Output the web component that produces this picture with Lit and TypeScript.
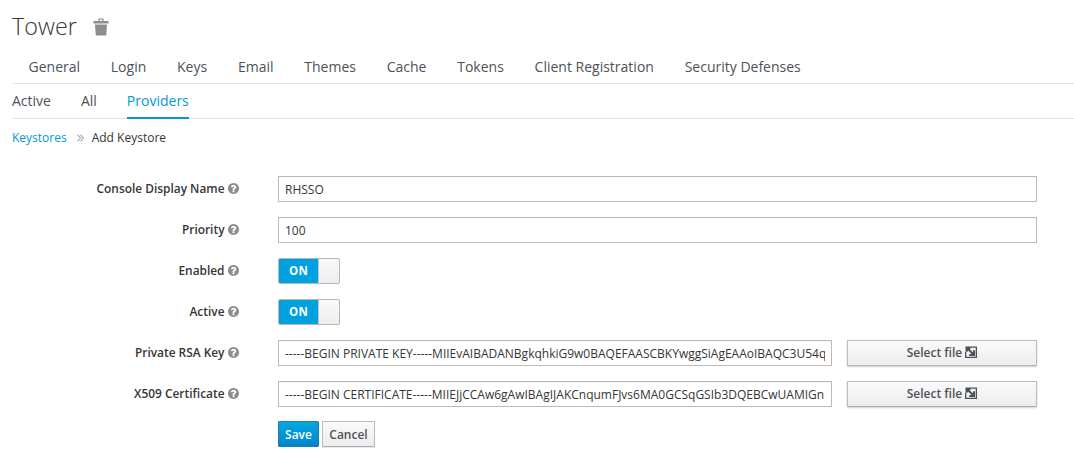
import { LitElement, html, css } from "lit";
import { customElement } from "lit/decorators.js";

const help = html`<svg class="help" viewBox="0 0 1536 1536" width="11" height="11"><path fill="#8b8d8f" d="M896 1248v-192q0-14-9-23t-23-9H672q-14 0-23 9t-9 23v192q0 14 9 23t23 9h192q14 0 23-9t9-23zm256-672q0-88-55.500-163T958 297t-170-41q-243 0-371 213-15 24 8 42l132 100q7 6 19 6 16 0 25-12 53-68 86-92 34-24 86-24 48 0 85.500 26t37.500 59q0 38-20 61t-68 45q-63 28-115.500 86.500T640 892v36q0 14 9 23t23 9h192q14 0 23-9t9-23q0-19 21.500-49.500T972 829q32-18 49-28.500t46-35 44.500-48 28-60.500 12.500-81zm384 192q0 209-103 385.500T1153.500 1433 768 1536t-385.500-103T103 1153.500 0 768t103-385.500T382.500 103 768 0t385.500 103T1433 382.500 1536 768z"/></svg>`;

const fileIcon = html`<svg class="fi" viewBox="0 0 12 12" width="12" height="12"><path fill="none" stroke="#4d5258" stroke-width="1.300" d="M4.500 1.150H11.350V11.350H.65V5.500"/><path fill="#4d5258" d="M.5.500H4.500L6 2 4.800 3.200 8 6.400V4.300H10V10H4.300V8H6.600L3.300 4.700 2 6 .5 4.500z"/></svg>`;

const chevrons = html`<svg viewBox="0 0 7 8" width="7" height="8"><path fill="none" stroke="#a9a9a9" stroke-width="1.100" d="M.6.600 3.500 4 .6 7.400M3.500.600 6.400 4 3.500 7.400"/></svg>`;

@customElement("app-root")
export class AppRoot extends LitElement {
  static styles = css`
    :host { display: block; font-family: "Open Sans", sans-serif; font-size: 12px; color: #363636; background: #fff; height: 459px; overflow: hidden; }
    .page { padding-left: 12px; }
    h1 { margin: 0; height: 49px; display: flex; align-items: center; gap: 16.500px; font-size: 23.400px; font-weight: 300; color: #363636; padding-top: 4px; box-sizing: border-box; line-height: 33px; }
    h1 svg { margin-top: 1px; }
    .tabs { display: flex; gap: 30.770px; height: 34px; padding-left: 16.500px; border-bottom: 1px solid #e4e4e4; font-size: 14px; align-items: center; color: #4d5258; }
    .sub { display: flex; gap: 30px; height: 34px; border-bottom: 1px solid #e4e4e4; font-size: 14px; align-items: center; color: #4d5258; }
    .sub span { height: 34px; line-height: 34px; box-sizing: border-box; }
    .sub .on { color: #0099d3; border-bottom: 2px solid #0099d3; height: 35px; margin-bottom: -1px; }
    .crumbs { display: flex; align-items: center; height: 37px; font-size: 12px; }
    .crumbs a { color: #0099d3; }
    .crumbs svg { margin: 0 8px 0 10px; }
    form { display: grid; grid-template-columns: 266px 759px; row-gap: 15px; padding-top: 20px; }
    label { display: flex; justify-content: flex-end; align-items: center; gap: 3.500px; font-weight: 600; color: #363636; height: 26px; padding-right: 39px; font-size: 11.900px; transform: translateY(-1px); }
    input { display: block; width: 100%; height: 26px; box-sizing: border-box; border: 1px solid #bababa; background: #fff; padding: 2px 6px; font: 12px "Open Sans", sans-serif; color: #363636; box-shadow: inset 0 1px 1px rgba(3,3,3,.03); outline: none; }
    .file { display: flex; gap: 15px; }
    .file input { width: 554px; flex: none; }
    .btn { border: 1px solid #bbb; border-bottom-color: #b0b0b0; border-radius: 1px; background: linear-gradient(#fafafa, #ededed); color: #4d5258; font-size: 12px; font-weight: 600; height: 26px; display: flex; align-items: center; justify-content: center; gap: 3px; box-sizing: border-box; box-shadow: 0 1px 2px rgba(3,3,3,.2); }
    .file .btn { width: 190px; padding-bottom: 2px; }
    .sw { width: 62px; height: 26px; box-sizing: border-box; border: 1px solid #b7b7b7; border-radius: 2px; display: flex; overflow: hidden; background: linear-gradient(#fafafa, #ededed); }
    .sw b { width: 39px; background: #00a1de; color: #fff; font-weight: 700; font-size: 11.500px; text-align: center; line-height: 24px; letter-spacing: .2px; }
    .sw span { flex: 1; border-left: 1px solid #c8c8c8; }
    .actions { grid-column: 2; display: flex; gap: 3px; margin-top: -1px; }
    .save { width: 41px; height: 26px; box-sizing: border-box; border: 1px solid #267da1; border-radius: 1px; color: #fff; background: linear-gradient(#00a8e1, #0085cf); font-weight: 600; font-size: 12px; display: flex; align-items: center; justify-content: center; }
    .cancel { width: 53px; box-shadow: 0 1px 1px rgba(3,3,3,.1); }
    svg { flex: none; display: block; }
  `;

  render() {
    const key = "-----BEGIN PRIVATE KEY-----MIIEvAIBADANBgkqhkiG9w0BAQEFAASCBKYwggSiAgEAAoIBAQC3U54qzPvE8Xo";
    const cert = "-----BEGIN CERTIFICATE-----MIIEJjCCAw6gAwIBAgIJAKCnqumFJvs6MA0GCSqGSIb3DQEBCwUAMIGnMQswCQ";
    return html`<div class="page">
      <h1>Tower <svg viewBox="0 0 16 18" width="16" height="18"><path fill="#8b8d8f" d="M5.500 3V.500h5V3H15.500V5.500H.500V3zM6.700 1.600V3h2.600V1.600zM2 6.500h12l-.8 11H2.800z"/></svg></h1>
      <div class="tabs">
        ${["General", "Login", "Keys", "Email", "Themes", "Cache", "Tokens", "Client Registration", "Security Defenses"].map((t) => html`<span>${t}</span>`)}
      </div>
      <div class="sub"><span>Active</span><span>All</span><span class="on">Providers</span></div>
      <div class="crumbs"><a>Keystores</a>${chevrons}<span>Add Keystore</span></div>
      <form>
        <label>Console Display Name ${help}</label><input readonly value="RHSSO" />
        <label>Priority ${help}</label><input readonly value="100" />
        <label>Enabled ${help}</label><div class="sw"><b>ON</b><span></span></div>
        <label>Active ${help}</label><div class="sw"><b>ON</b><span></span></div>
        <label>Private RSA Key ${help}</label>
        <div class="file"><input readonly .value=${key} /><div class="btn">Select file ${fileIcon}</div></div>
        <label>X509 Certificate ${help}</label>
        <div class="file"><input readonly .value=${cert} /><div class="btn">Select file ${fileIcon}</div></div>
        <div class="actions"><div class="save">Save</div><div class="btn cancel">Cancel</div></div>
      </form>
    </div>`;
  }
}
